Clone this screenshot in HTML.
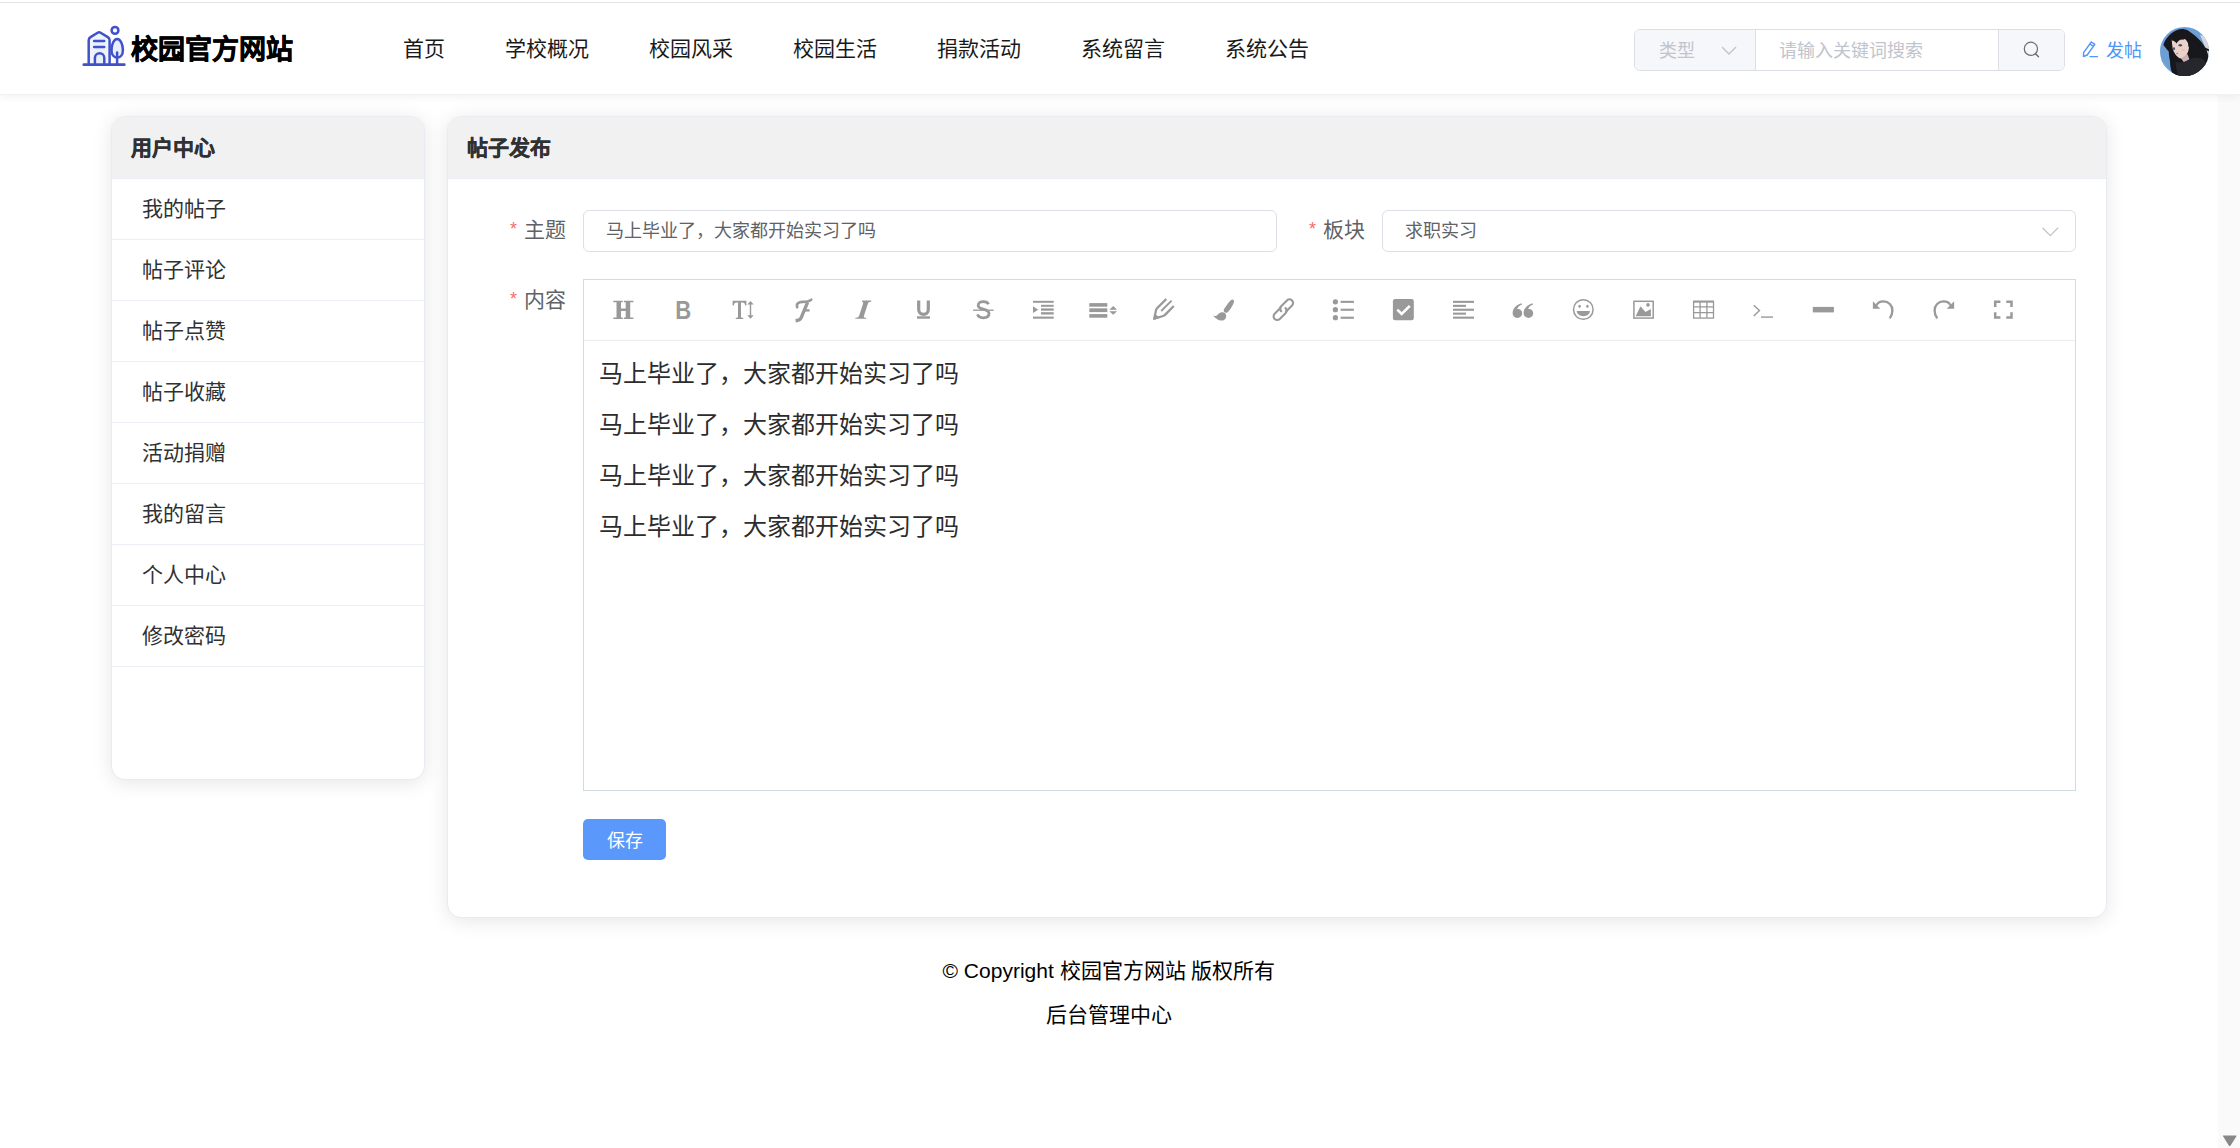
<!DOCTYPE html>
<html lang="zh-CN"><head><meta charset="utf-8">
<style>
*{box-sizing:border-box;margin:0;padding:0}
html,body{width:2240px;height:1148px;overflow:hidden;background:#fff;font-family:"Liberation Sans",sans-serif;}
.abs{position:absolute}
#topline{position:absolute;left:0;top:2px;width:2240px;height:1px;background:#e2e5e2}
#header{position:absolute;left:0;top:0;width:2240px;height:95px;background:#fff;border-bottom:1px solid #f0f2f4;box-shadow:0 2px 8px rgba(0,0,0,0.06)}
.logo-text{position:absolute;left:131px;top:32px;font-size:27px;font-weight:bold;color:#000;-webkit-text-stroke:0.6px #000;line-height:36px;white-space:nowrap}
.nav{position:absolute;top:31px;font-size:21px;color:#1a1a1a;line-height:36px;white-space:nowrap}
.search{position:absolute;left:1634px;top:29px;width:431px;height:42px;border:1px solid #dcdfe6;border-radius:6px;background:#fff;overflow:hidden}
.search .sel{position:absolute;left:0;top:0;width:121px;height:40px;background:#f5f7fa;border-right:1px solid #dcdfe6}
.search .btn{position:absolute;right:0;top:0;width:66px;height:40px;background:#f5f7fa;border-left:1px solid #dcdfe6}
.card{position:absolute;background:#fff;border:1px solid #e8ebf2;border-radius:14px;box-shadow:0 3px 20px rgba(0,0,0,0.10);overflow:hidden}
.card .hd{position:absolute;left:0;top:0;right:0;height:62px;background:#f1f1f1;border-bottom:1px solid #ebeef5;font-size:21px;font-weight:bold;color:#303133;-webkit-text-stroke:0.35px #303133;line-height:62px}
.side .item{position:absolute;left:0;width:312px;height:61px;border-bottom:1px solid #ebeef5;font-size:21px;color:#303133;line-height:60px;padding-left:30px}
.label{position:absolute;font-size:21px;color:#606266;line-height:40px;white-space:nowrap;text-align:right}
.label b{color:#f56c6c;font-weight:normal;margin-right:7px;font-size:18px;position:relative;top:-2px;font-family:"Liberation Sans",sans-serif}
.inp{position:absolute;border:1px solid #dcdfe6;border-radius:6px;background:#fff;font-size:18px;color:#606266;line-height:40px;padding-left:22px;white-space:nowrap}
.editor{position:absolute;left:583px;top:279px;width:1493px;height:512px;border:1px solid #d0dce0;background:#fff}
.tb{position:absolute;left:0;top:0;width:100%;height:61px;border-bottom:1px solid #ededed}
.ico{position:absolute;top:17px;width:28px;height:28px}
.ctext{position:absolute;left:15px;font-size:24px;color:#2c2c2c;line-height:36px;white-space:nowrap}
.save{position:absolute;left:583px;top:819px;width:83px;height:41px;border-radius:5px;background:#5a98fc;color:#fff;font-size:18px;line-height:44px;text-align:center}
.foot{position:absolute;left:0;width:2218px;text-align:center;font-size:21px;color:#000;line-height:30px;white-space:nowrap}
.ph{position:absolute;top:2px;font-size:18px;line-height:39px;color:#c0c4cc;white-space:nowrap}
#sbar{position:absolute;left:2218px;top:94px;width:22px;height:1054px;background:#fafafa}
</style></head><body>
<div id="sbar"></div>
<svg class="abs" style="left:2220px;top:1133px" width="20" height="15" viewBox="0 0 20 15"><path d="M3.2 3.6 Q2.2 2.6 3.6 2.6 H15.8 Q17.2 2.6 16.3 3.6 L10.6 12.4 Q9.7 13.6 8.8 12.4 Z" fill="#888"/></svg>
<div id="header">
  <svg class="abs" style="left:60px;top:10px" width="80" height="70" viewBox="60 10 80 70">
    <defs><radialGradient id="lg" cx="0.5" cy="0.55" r="0.6"><stop offset="0" stop-color="#e6ecfb"/><stop offset="1" stop-color="#f4f7fd"/></radialGradient></defs>
    <g fill="none" stroke="#3f52cc" stroke-width="2.5" stroke-linecap="round" stroke-linejoin="round">
      <path d="M88.7 63.5 V40.2 Q88.7 38.2 90.5 37.1 L97.6 32.7 Q99.1 31.8 100.6 32.7 L107.8 37.1 Q109.6 38.2 109.6 40.2 V63.5" fill="url(#lg)"/>
      <path d="M94.1 41 H104.2 M94.1 47.1 H104.2"/>
      <path d="M94.9 63.5 V57.9 A4.7 4.7 0 0 1 104.3 57.9 V63.5" fill="#e9eefb"/>
      <path d="M117.2 38.9 C120.6 38.9 122.9 44.5 122.9 50.2 C122.9 54.6 120.5 57.6 117.2 57.6 C113.9 57.6 111.5 54.6 111.5 50.2 C111.5 44.5 113.8 38.9 117.2 38.9 Z" fill="#e9eefb"/>
      <path d="M117.1 52.6 V63.5"/>
      <circle cx="115" cy="30.4" r="3.4"/>
      <path d="M83.8 64.7 H124.3" stroke-width="2.7"/>
    </g>
  </svg>
  <div class="logo-text">校园官方网站</div>
  <div class="nav" style="left:403px">首页</div>
  <div class="nav" style="left:505px">学校概况</div>
  <div class="nav" style="left:649px">校园风采</div>
  <div class="nav" style="left:793px">校园生活</div>
  <div class="nav" style="left:937px">捐款活动</div>
  <div class="nav" style="left:1081px">系统留言</div>
  <div class="nav" style="left:1225px">系统公告</div>
  <div class="search">
    <div class="sel"><span class="ph" style="left:24px">类型</span>
      <svg class="abs" style="left:86px;top:16px" width="16" height="9" viewBox="0 0 16 9"><path d="M1 1 L8 8 L15 1" fill="none" stroke="#c0c4cc" stroke-width="1.4"/></svg>
    </div>
    <span class="ph" style="left:144px">请输入关键词搜索</span>
    <div class="btn">
      <svg class="abs" style="left:23px;top:10px" width="20" height="20" viewBox="0 0 20 20"><circle cx="8.9" cy="8.8" r="6.6" fill="none" stroke="#6a6c70" stroke-width="1.2"/><path d="M13.5 13.7 L16.5 16.7" stroke="#67696e" stroke-width="1.4" stroke-linecap="round"/></svg>
    </div>
  </div>
  <svg class="abs" style="left:2080px;top:38px" width="22" height="22" viewBox="0 0 22 22"><g fill="none" stroke="#4e97f8" stroke-width="1.4" stroke-linejoin="round"><path d="M3.5 18.5 L3.6 14.6 L11.3 4 L14.8 6.4 L7.2 17 Z M9.9 6 L13.4 8.4"/><path d="M10 18.6 H17.5" stroke-linecap="round"/></g></svg>
  <div class="abs" style="left:2106px;top:33px;font-size:18px;line-height:36px;color:#4e97f8">发帖</div>
  <div class="abs avatar" style="left:2160px;top:27px;width:49px;height:49px;border-radius:50%;overflow:hidden;background:#6c9fd5">
    <svg width="49" height="49" viewBox="0 0 49 49">
      <path d="M0 30 L14 49 H0 Z" fill="#78abdf"/>
      <path d="M40 8 L50 10 V34 L46 22 Z" fill="#d6d7dd"/>
      <path d="M3.4 18 C5 12 10 6 17 3 C21 1.5 25 2 28 3.5 C32 6 37 10 41 14.5 C45 19 48 25 49 33 L49 49 H14 C11 45 10 40 10 34 C9 30 9 27 8.6 24.3 C6.5 22 5 20 3.4 18 Z" fill="#17171c"/>
      <path d="M41 19 L49.5 22.5 L49.5 24.5 L42 22 Z" fill="#17171c"/>
      <path d="M11.7 12.2 C14 11 20 10.2 24.3 11.5 C26.5 13 28.2 15 28.6 17.5 L29 20.5 C28.5 24.5 27 28 24.5 30.5 C22 32 20 31.8 18.5 30.5 C16.8 29 15.5 27.5 14.9 26.4 C13.6 24.4 12.8 22.5 12.6 21 C12.2 18 11.8 15 11.7 12.2 Z" fill="#ead2cb"/>
      <path d="M21 31.2 L27.4 27 L29.5 32.5 L24 35.5 Z" fill="#cdb2b5"/>
      <path d="M15.5 35 C20 36 25 35 29 32.5 C33 30.5 38 30 42 31.5 C46 34 48 40 49 49 H17 C16 44 15.5 40 15.5 35 Z" fill="#26262d"/>
      <path d="M9.5 26 C11 32 12 40 14.5 49 H18.5 C16 42 14.5 34 13.5 27 Z" fill="#17171c"/>
      <path d="M11 10 C15 7.5 22 7.5 27 10.5 C25.5 12 24 12.8 22 12.6 C20 12.8 18 14 16.5 16.5 C15.5 15 14 13.6 11.8 13.6 Z" fill="#17171c"/>
      <path d="M26.5 11 C28.5 13 30 17 30.5 22 L28.6 20 C28.4 16.8 27.6 14 26 12 Z" fill="#17171c"/>
      <ellipse cx="20.3" cy="18.2" rx="1.8" ry="1.3" fill="#4a5468"/>
      <ellipse cx="14" cy="21.7" rx="1.1" ry="1.4" fill="#4a5468"/>
      <ellipse cx="17.2" cy="26.5" rx="1" ry="0.7" fill="#e07565"/>
      <ellipse cx="23.5" cy="23" rx="2" ry="1.1" fill="#e9c0c0"/>
    </svg>
  </div>
</div>
<div id="topline"></div>

<!-- sidebar -->
<div class="card side" style="left:111px;top:116px;width:314px;height:664px">
  <div class="hd" style="padding-left:19px">用户中心</div>
  <div class="item" style="top:62px">我的帖子</div>
  <div class="item" style="top:123px">帖子评论</div>
  <div class="item" style="top:184px">帖子点赞</div>
  <div class="item" style="top:245px">帖子收藏</div>
  <div class="item" style="top:306px">活动捐赠</div>
  <div class="item" style="top:367px">我的留言</div>
  <div class="item" style="top:428px">个人中心</div>
  <div class="item" style="top:489px">修改密码</div>
</div>

<!-- main -->
<div class="card" style="left:447px;top:116px;width:1660px;height:802px">
  <div class="hd" style="padding-left:19px">帖子发布</div>
</div>

<div class="label" style="left:480px;top:210px;width:86px"><b>*</b>主题</div>
<div class="inp" style="left:583px;top:210px;width:694px;height:42px">马上毕业了，大家都开始实习了吗</div>
<div class="label" style="left:1280px;top:210px;width:85px"><b>*</b>板块</div>
<div class="inp" style="left:1382px;top:210px;width:694px;height:42px">求职实习</div>
<svg class="abs" style="left:2041px;top:226px" width="19" height="13" viewBox="0 0 19 13"><path d="M1.5 1.8 L9.3 9.6 L17.1 1.8" fill="none" stroke="#c0c4cc" stroke-width="1.25"/></svg>
<div class="label" style="left:480px;top:280px;width:86px"><b>*</b>内容</div>

<div class="editor">
  <div class="tb">
    <svg class="abs" style="left:-584px;top:-280px" width="2100" height="345" viewBox="0 0 2100 345">
      <g fill="#999">
        <path d="M616.5 300.8 H621 V319 H616.5 Z M625.7 300.8 H630.2 V319 H625.7 Z M613.3 300.8 H622.8 V302.3 H613.3 Z M613.3 317.5 H622.8 V319 H613.3 Z M623.9 300.8 H633.4 V302.3 H623.9 Z M623.9 317.5 H633.4 V319 H623.9 Z M621 308.5 H625.7 V311.1 H621 Z"/>
        <text x="683.3" y="319" font-family="Liberation Sans" font-weight="bold" font-size="26" text-anchor="middle" transform="translate(683.3 0) scale(0.85 1) translate(-683.3 0)">B</text>
        <!-- T with arrow -->
        <path d="M732.6 300.8 H746.4 V305.5 H745.2 C744.8 303.2 744 302.6 742 302.6 H741 V316.8 C741 317.6 741.6 317.9 743.3 318 V319 H735.7 V318 C737.4 317.9 738 317.6 738 316.8 V302.6 H737 C735 302.6 734.2 303.2 733.8 305.5 H732.6 Z"/>
        <path d="M750.5 301 L753.7 304.6 H751.2 V315.2 H753.7 L750.5 318.8 L747.3 315.2 H749.8 V304.6 H747.3 Z"/>
        <!-- script F -->
        <g fill="none" stroke="#999" stroke-linecap="round">
          <path d="M797.2 307.2 C796 303.8 798.6 301.9 802.6 301.9 C806 301.9 809.2 301.6 811.3 299.6" stroke-width="2.6"/>
          <path d="M807.6 302.4 L801.2 317.6 C800.2 319.8 798 320.6 795.6 320.8" stroke-width="3.4" stroke-linecap="butt"/>
          <path d="M803 310.4 H809.6" stroke-width="2.3" stroke-linecap="butt"/>
        </g>
        <!-- italic I -->
        <path d="M862.2 300.6 H871.4 L871.1 301.7 C869 301.8 868.3 302.2 867.8 304 L864 315.4 C863.5 317.2 863.9 317.6 866.4 317.7 L866.1 318.7 H855.2 L855.5 317.7 C857.8 317.6 858.6 317.2 859.2 315.4 L863 304 C863.5 302.2 863.1 301.8 862 301.7 Z"/>
      </g>
      <g fill="none" stroke="#999">
        <!-- U underline -->
        <path d="M918.7 300.6 V309.5 C918.7 312.6 920.8 314.4 923.5 314.4 C926.2 314.4 928.3 312.6 928.3 309.5 V300.6" stroke-width="3.2"/>
        <path d="M917 317.5 H930" stroke-width="2.4"/>
        <!-- S strike -->
        <path d="M988.5 304.2 C987.8 302.4 986 301.6 983.3 301.6 C980.2 301.6 978.2 303.2 978.2 305.4 C978.2 310.2 989 308.2 989 313.6 C989 316.4 986.6 317.8 983.3 317.8 C980.4 317.8 978.2 316.6 977.5 314.4" stroke-width="2.8"/>
        <path d="M973 310.2 H993.7" stroke-width="1.3"/>
      </g>
      <g fill="#999">
        <!-- indent -->
        <rect x="1033" y="300.8" width="20.7" height="2"/>
        <rect x="1041" y="304.8" width="12.7" height="2"/>
        <rect x="1041" y="308.4" width="12.7" height="2.3"/>
        <rect x="1041" y="312.2" width="12.7" height="2.3"/>
        <rect x="1033" y="316.6" width="20.7" height="2.1"/>
        <path d="M1033 306.2 L1038.2 309.7 L1033 313.1 Z"/>
        <!-- line height -->
        <rect x="1089.3" y="303.1" width="18" height="3.6"/>
        <rect x="1089.3" y="308.3" width="18" height="3.8"/>
        <rect x="1089.3" y="314.1" width="18" height="3.6"/>
        <path d="M1113.2 306 L1117.1 309.7 H1109.3 Z M1109.3 311.2 H1117.1 L1113.2 314.8 Z"/>
      </g>
      <g fill="none" stroke="#999" stroke-linejoin="round">
        <!-- pencil -->
        <path d="M1156.3 309 L1166.3 299" stroke-width="2.4"/>
        <path d="M1161.2 311 L1171.6 300.6" stroke-width="1.9"/>
        <path d="M1173.8 306 L1164 315.8" stroke-width="2.4"/>
        <path d="M1156.3 309 L1154.2 318.6 L1164 315.8" stroke-width="2.2"/>
      </g>
      <g fill="#999">
        <path d="M1153 320 L1155 313.5 L1159.5 318 Z"/>
        <!-- brush -->
        <path d="M1232 299.6 C1233.3 299.4 1234.3 300.5 1234 301.8 C1233 305.4 1230 310.3 1227.6 312.2 C1226.4 313.1 1225 313 1224.2 312 C1223.4 311 1223.6 309.6 1224.5 308.6 C1226.6 305.8 1229.5 300.5 1232 299.6 Z"/>
        <path d="M1222.9 312.3 C1225 312.5 1226.3 314.3 1226.2 316.4 C1226 318.9 1224 320.6 1221.4 320.6 C1218 320.6 1215.5 318.3 1213 315.5 C1214.2 316 1215.6 316.1 1216.8 315.4 C1218 314.3 1219.7 312.1 1222.9 312.3 Z"/>
      </g>
      <g fill="none" stroke="#999" stroke-width="2.1" stroke-linecap="round">
        <!-- link -->
        <path d="M1286.05 311.55 L1292.05 305.55 A3.6 3.6 0 0 0 1286.95 300.45 L1280.95 306.45 A3.6 3.6 0 0 0 1281.2 311.3"/>
        <path d="M1280.65 307.85 L1274.65 313.85 A3.6 3.6 0 0 0 1279.75 318.95 L1285.75 312.95 A3.6 3.6 0 0 0 1285.5 308.1"/>
      </g>
      <g fill="#999">
        <!-- ul -->
        <circle cx="1335.4" cy="301.8" r="2.6"/><circle cx="1335.4" cy="309.7" r="2.6"/><circle cx="1335.4" cy="317.7" r="2.6"/>
        <rect x="1340.6" y="300.8" width="13.3" height="2.1"/><rect x="1340.6" y="308.7" width="13.3" height="2.1"/><rect x="1340.6" y="316.7" width="13.3" height="2.1"/>
        <!-- checkbox -->
        <rect x="1392.9" y="299" width="20.9" height="21.3" rx="2.2"/>
      </g>
      <path d="M1397.3 309.6 L1401.7 314 L1409.8 305.8" fill="none" stroke="#fff" stroke-width="2.6"/>
      <g fill="#999">
        <!-- align -->
        <rect x="1453" y="300.8" width="21" height="2.1"/>
        <rect x="1453" y="304.8" width="13" height="2.1"/>
        <rect x="1453" y="308.7" width="21" height="2.1"/>
        <rect x="1453" y="312.6" width="13" height="2.1"/>
        <rect x="1453" y="316.6" width="21" height="2.1"/>
        <!-- quote -->
        <path d="M1521.4 303.2 C1516.4 304.6 1512.6 308.6 1512.6 313 C1512.6 316 1514.7 317.9 1517.4 317.9 C1520.1 317.9 1522.2 316 1522.2 313.3 C1522.2 310.8 1520.4 309 1518 309 L1517.2 309.1 C1517.9 307 1519.6 305.4 1522.1 304.6 Z"/>
        <path d="M1532.4 303.2 C1527.4 304.6 1523.6 308.6 1523.6 313 C1523.6 316 1525.7 317.9 1528.4 317.9 C1531.1 317.9 1533.2 316 1533.2 313.3 C1533.2 310.8 1531.4 309 1529 309 L1528.2 309.1 C1528.9 307 1530.6 305.4 1533.1 304.6 Z"/>
      </g>
      <!-- smiley -->
      <circle cx="1583.3" cy="309.5" r="9.8" fill="none" stroke="#999" stroke-width="1.5"/>
      <g fill="#999">
        <ellipse cx="1579.6" cy="306.2" rx="1.2" ry="1.5"/><ellipse cx="1587.4" cy="306.2" rx="1.2" ry="1.5"/>
        <path d="M1576.7 311 H1590 C1589.6 314.2 1586.8 316.2 1583.35 316.2 C1579.9 316.2 1577.1 314.2 1576.7 311 Z"/>
      </g>
      <!-- image -->
      <rect x="1633.9" y="301.3" width="19.3" height="16.8" fill="none" stroke="#999" stroke-width="1.5"/>
      <path d="M1635.6 316.2 L1640.5 306.2 L1645.5 312 L1650.9 309 V316.2 Z" fill="#999"/>
      <circle cx="1648" cy="304.9" r="1.8" fill="#999"/>
      <!-- table -->
      <g fill="none" stroke="#999" stroke-width="1.3">
        <rect x="1693.6" y="301.5" width="19.9" height="16.6"/>
        <path d="M1700.1 301.5 V318.1 M1706.9 301.5 V318.1 M1693.6 306.9 H1713.5 M1693.6 312.6 H1713.5"/>
      </g>
      <rect x="1693" y="300.6" width="21" height="2" fill="#999"/>
      <!-- code -->
      <path d="M1753.7 305.3 L1759.5 310.6 L1753.7 316" fill="none" stroke="#999" stroke-width="1.4"/>
      <rect x="1761" y="316.4" width="12" height="1.4" fill="#999"/>
      <!-- hr -->
      <rect x="1812.8" y="306.9" width="21.1" height="5.5" fill="#999"/>
      <!-- undo -->
      <path d="M1876.5 305.2 C1878 302.4 1880.6 301.4 1883.4 301.4 C1888.6 301.4 1892.4 305.2 1892.4 310.4 C1892.4 313.6 1891.4 316 1889.8 318.3" fill="none" stroke="#999" stroke-width="2.3"/>
      <path d="M1872.9 301.3 V308.7 H1880.3 Z" fill="#999"/>
      <!-- redo -->
      <path d="M1950.5 305.2 C1949 302.4 1946.4 301.4 1943.6 301.4 C1938.4 301.4 1934.6 305.2 1934.6 310.4 C1934.6 313.6 1935.6 316 1937.2 318.3" fill="none" stroke="#999" stroke-width="2.3"/>
      <path d="M1954.1 301.3 V308.7 H1946.7 Z" fill="#999"/>
      <!-- fullscreen -->
      <path d="M1995.2 307 V301.8 H2000.4 M2006.3 301.8 H2011.5 V307 M2011.5 312.3 V317.5 H2006.3 M2000.4 317.5 H1995.2 V312.3" fill="none" stroke="#999" stroke-width="2.5"/>
    </svg>
  </div>
  <div class="ctext" style="top:76px">马上毕业了，大家都开始实习了吗</div>
  <div class="ctext" style="top:127px">马上毕业了，大家都开始实习了吗</div>
  <div class="ctext" style="top:178px">马上毕业了，大家都开始实习了吗</div>
  <div class="ctext" style="top:229px">马上毕业了，大家都开始实习了吗</div>
</div>

<div class="save">保存</div>

<div class="foot" style="top:956px">© Copyright 校园官方网站 版权所有</div>
<div class="foot" style="top:1000px">后台管理中心</div>
</body></html>
